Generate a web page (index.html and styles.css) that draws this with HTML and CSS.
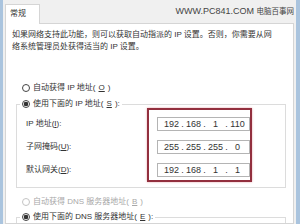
FILE: index.html
```html
<!DOCTYPE html>
<html lang="zh-CN">
<head>
<meta charset="utf-8">
<link rel="stylesheet" href="styles.css">
</head>
<body>
<div class="frame">
  <div class="strip strip-left"></div>
  <div class="main">
    <div class="header">
      <div class="tab">常规</div>
      <div class="watermark">WWW.PC841.COM <span class="cn">电脑百事网</span></div>
    </div>
    <div class="panel">
      <p class="intro">如果网络支持此功能，则可以获取自动指派的 IP 设置。否则，你需要从网<br>络系统管理员处获得适当的 IP 设置。</p>
      <div class="radio r-auto"><span class="dot"></span>自动获得 IP 地址(<span class="key">O</span>)</div>
      <fieldset class="group">
        <legend><div class="radio"><span class="dot on"></span>使用下面的 IP 地址(<span class="key">S</span>):</div></legend>
        <div class="rows">
          <div class="labels">
            <div>IP 地址(<span class="key">I</span>):</div>
            <div>子网掩码(<span class="key">U</span>):</div>
            <div>默认网关(<span class="key">D</span>):</div>
          </div>
          <div class="highlight">
            <div class="ip"><span>192</span><i>.</i><span>168</span><i>.</i><span>1</span><i>.</i><span>110</span></div>
            <div class="ip"><span>255</span><i>.</i><span>255</span><i>.</i><span>255</span><i>.</i><span>0</span></div>
            <div class="ip"><span>192</span><i>.</i><span>168</span><i>.</i><span>1</span><i>.</i><span>1</span></div>
          </div>
        </div>
      </fieldset>
      <div class="radio disabled r-dns"><span class="dot"></span>自动获得 DNS 服务器地址(<span class="key">B</span>)</div>
      <fieldset class="group dns">
        <legend><div class="radio"><span class="dot on"></span>使用下面的 DNS 服务器地址(<span class="key">E</span>):</div></legend>
        <div class="dns-body"></div>
      </fieldset>
    </div>
  </div>
  <div class="strip strip-right"></div>
</div>
</body>
</html>
```

FILE: styles.css
```css
* { box-sizing: border-box; }
html, body { margin: 0; padding: 0; }
body {
  width: 300px;
  height: 224px;
  overflow: hidden;
  background: #f0f0f0;
  font-family: "Liberation Sans", "Noto Sans CJK SC", sans-serif;
  font-size: 8px;
  color: #333;
  text-autospace: no-autospace;
}
.frame { display: flex; height: 224px; }
.strip { flex: none; background: #aac4de; }
.strip-left { width: 3px; }
.strip-right { width: 4px; }
.main {
  flex: 1;
  min-width: 0;
  padding: 0 2px;
  display: flex;
  flex-direction: column;
}
.header { display: flex; height: 24px; margin-bottom: -1px; flex: none; }
.tab {
  position: relative;
  z-index: 1;
  margin-top: 4px;
  width: 35px;
  height: 20px;
  background: #fff;
  border: 1px solid #d5d5d5;
  border-bottom: none;
  padding: 3px 0 0 4px;
  line-height: 12px;
}
.watermark {
  margin-left: auto;
  margin-top: 5px;
  line-height: 12px;
  font-family: "Liberation Sans", sans-serif;
  font-size: 9px;
  color: #444;
  white-space: nowrap;
}
.watermark .cn { font-family: "Noto Sans CJK SC", sans-serif; font-size: 7.5px; }
.panel {
  flex: 1;
  background: #fff;
  border: 1px solid #d5d5d5;
  padding: 5px 0 0 0;
  overflow: hidden;
}
.intro { margin: 0 0 0 6px; line-height: 12px; white-space: nowrap; }
.radio {
  display: flex;
  align-items: center;
  gap: 3px;
  line-height: 12px;
  white-space: nowrap;
}
.panel > .radio { margin-left: 16px; }
.r-auto { margin-top: 29px; }
.r-dns { margin-top: 8px; }
.dot {
  flex: none;
  width: 8px;
  height: 8px;
  border: 1px solid #444;
  border-radius: 50%;
  background: #fff;
}
.dot.on { background: radial-gradient(circle, #333 0 2px, #fff 2.6px); }
.disabled { color: #a8a8a8; }
.disabled .dot { border-color: #c4c4c4; }
.key { text-decoration: underline; text-underline-offset: 1px; }
.group {
  margin: 5px 0 0 10px;
  width: 270px;
  min-width: 0;
  border: 1px solid #dcdcdc;
  padding: 0 0 5px 9px;
}
.group legend {
  padding: 0 2px;
  margin-left: -6px;
  line-height: 10px;
}
.group legend .radio { line-height: 10px; }
.dns { margin-top: 4px; }
.dns-body { height: 30px; }
.rows { display: flex; margin-top: -1px; }
.labels {
  flex: none;
  width: 121px;
  padding-top: 9px;
  display: flex;
  flex-direction: column;
  gap: 9px;
}
.labels div { line-height: 14px; white-space: nowrap; }
.highlight {
  flex: none;
  width: 105px;
  border: 2px solid #922f3e;
  box-shadow: 0 0 2px rgba(210, 90, 100, 0.55);
  padding: 7px 0 3px 8px;
  display: flex;
  flex-direction: column;
  gap: 9px;
}
.ip {
  height: 14px;
  border: 1px solid #b4b4b4;
  background: #fff;
  display: flex;
  align-items: center;
  padding-left: 5px;
  font-family: "Liberation Sans", sans-serif;
  font-size: 9px;
  color: #333;
}
.ip span { width: 17px; text-align: center; }
.ip i { font-style: normal; width: 5px; text-align: center; }
```
